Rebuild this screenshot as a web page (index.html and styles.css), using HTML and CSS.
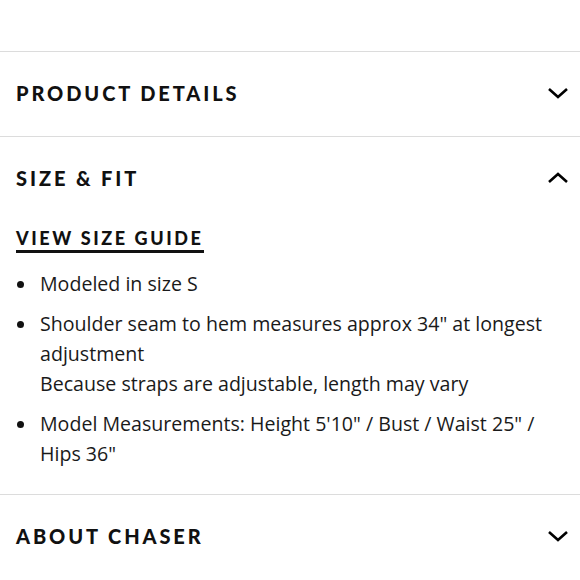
FILE: index.html
```html
<!DOCTYPE html>
<html>
<head>
<meta charset="utf-8">
<link rel="stylesheet" href="styles.css">
</head>
<body>
<div class="accordion">
  <div class="section">
    <div class="header">
      <span class="title">PRODUCT DETAILS</span>
      <svg class="chev" width="22" height="14" viewBox="0 0 22 14"><path d="M2 3 L11 11 L20 3" fill="none" stroke="#000" stroke-width="2.6"/></svg>
    </div>
  </div>
  <div class="section">
    <div class="header">
      <span class="title">SIZE &amp; FIT</span>
      <svg class="chev" width="22" height="14" viewBox="0 0 22 14"><path d="M2 11 L11 3 L20 11" fill="none" stroke="#000" stroke-width="2.6"/></svg>
    </div>
    <div class="body">
      <a class="guide">VIEW SIZE GUIDE</a>
      <ul class="list">
        <li>Modeled in size S</li>
        <li>Shoulder seam to hem measures approx 34" at longest adjustment<br>Because straps are adjustable, length may vary</li>
        <li>Model Measurements: Height 5'10" / Bust / Waist 25" / Hips 36"</li>
      </ul>
    </div>
  </div>
  <div class="section">
    <div class="header">
      <span class="title">ABOUT CHASER</span>
      <svg class="chev" width="22" height="14" viewBox="0 0 22 14"><path d="M2 3 L11 11 L20 3" fill="none" stroke="#000" stroke-width="2.6"/></svg>
    </div>
  </div>
</div>
</body>
</html>
```
FILE: styles.css
```css
html, body { margin: 0; padding: 0; background: #fff; }
body { font-family: "Open Sans", "Liberation Sans", sans-serif; color: #111; }
.accordion { padding-top: 51px; }
.section { border-top: 1px solid #dcdcdc; }
.header {
  height: 84px;
  box-sizing: border-box;
  display: flex;
  align-items: center;
  justify-content: space-between;
  padding: 0 11px 3px 16px;
}
.title {
  font-family: "Lato", "Liberation Sans", sans-serif;
  font-weight: 900;
  font-size: 20px;
  letter-spacing: 2.9px;
  color: #111;
}
.chev { display: block; }
.body { padding: 5px 16px 15px 16px; }
.guide {
  display: inline-block;
  font-family: "Lato", "Liberation Sans", sans-serif;
  font-weight: 900;
  font-size: 18px;
  letter-spacing: 2.6px;
  color: #111;
  line-height: 24px;
  border-bottom: 3px solid #111;
}
.list { list-style: none; margin: 16px 0 0 0; padding: 0; }
.list li {
  position: relative;
  padding-left: 24px;
  font-size: 19.6px;
  line-height: 30px;
  margin-bottom: 10px;
  color: #1a1a1a;
}
.list li::before {
  content: "";
  position: absolute;
  left: 1px;
  top: 12px;
  width: 7px;
  height: 7px;
  border-radius: 50%;
  background: #111;
}
```
